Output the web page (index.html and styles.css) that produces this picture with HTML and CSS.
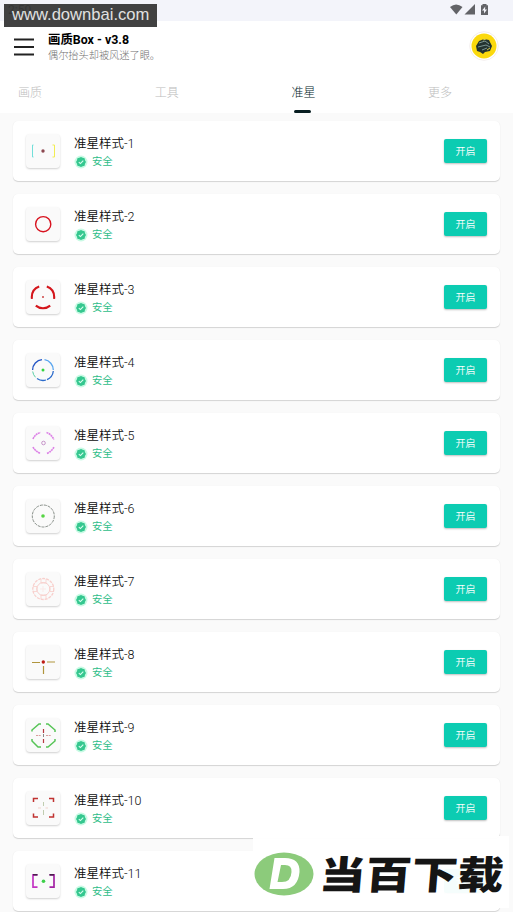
FILE: index.html
```
<!DOCTYPE html>
<html lang="zh-CN">
<head>
<meta charset="utf-8">
<title>画质Box</title>
<link rel="stylesheet" href="styles.css">
</head>
<body>
<div class="status">
  <span class="time">2:50</span>
  <svg class="status-icons" width="42" height="14" viewBox="0 0 42 14"><path d="M1 4Q7-1 13.500 4L7.300 11.500Z"/><path d="M26 1V11.500H15.500Z"/><path fill-rule="evenodd" d="M33.500 1h4v1.200H39V12h-7V2.200h1.500zM36.300 3.500L33 7.500h2v3L38 6.500h-2z"/></svg>
</div>
<header class="header">
  <svg class="menu" width="20" height="18" viewBox="0 0 20 18"><path d="M0 1.500H20M0 9H20M0 16.500H20"/></svg>
  <div class="heading">
    <h1>画质Box - v3.8</h1>
    <p>偶尔抬头却被风迷了眼。</p>
  </div>
  <svg class="avatar" width="30" height="30" viewBox="0 0 30 30"><circle cx="15" cy="15" r="14.300" fill="#fff" stroke="#f3eeee"/><circle cx="15" cy="15" r="12.500" fill="#fbd90d"/><path d="M7 15l3-5 5-2 5 1 3 6-2 5-5 1-2 2-3-2-3-1z" fill="#23332f"/><path d="M10 12l6-2 4 3M9 16l8-2 4 2M13 19l5-2" stroke="#7a9591" fill="none"/><path d="M14 9l3-1M18 19l3-2" stroke="#d5c444"/></svg>
</header>
<nav class="tabs">
  <span>画质</span><span>工具</span><span class="active">准星</span><span>更多</span>
</nav>
<main class="list" id="list"></main>
<div class="site-mark">www.downbai.com</div>
<div class="brand">
  <svg width="60" height="44" viewBox="0 0 60 44"><ellipse cx="30" cy="22" rx="29.500" ry="21.500" fill="#8ccb7b"/><path fill-rule="evenodd" fill="#fff" d="M20.500 6H31Q46 6 45.500 20Q44 37 29 37H15.500ZM27 13L23.500 30H28Q37 30 37.500 20Q38 13 31 13Z"/></svg>
  <span class="brand-name">当百下载</span>
</div>
<script src="app.js"></script>
</body>
</html>
```
FILE: styles.css
```
* { box-sizing: border-box; }
body {
  margin: 0;
  height: 912px;
  overflow: hidden;
  position: relative;
  background: #fafafa;
  font-family: Roboto, "Noto Sans CJK SC", sans-serif;
  color: #1b1b1b;
}
.status {
  height: 21px;
  padding: 3px 22px 0 8px;
  display: flex;
  justify-content: space-between;
  background: #f3f4fa;
  font-size: 12px;
  line-height: 14px;
}
.status-icons { fill: #626367; }
.header {
  height: 52px;
  padding: 0 14px 0 14px;
  display: flex;
  align-items: center;
  background: #fff;
}
.menu { stroke: #222; stroke-width: 2; margin-top: -1px; }
.avatar { margin-top: -2px; }
.heading { margin-left: 14px; flex: 1; }
.heading h1 { margin: 0; font-size: 12.400px; line-height: 17px; font-weight: 700; color: #000; }
.heading p { margin: 0; font-size: 10.200px; line-height: 15px; color: #707070; font-weight: 300; }
.tabs {
  height: 40px;
  padding-left: 18px;
  display: grid;
  grid-template-columns: repeat(3, 136.700px) auto;
  background: #fff;
  font-size: 12px;
  font-weight: 300;
  line-height: 41px;
  color: #bdbdbd;
}
.tabs .active { color: #001a1e; position: relative; justify-self: start; }
.tabs .active::after {
  content: "";
  position: absolute;
  left: 3px;
  top: 37px;
  width: 17px;
  height: 3px;
  border-radius: 2px;
  background: #071d20;
}
.list { padding: 8px 13px 0; display: flex; flex-direction: column; gap: 13px; }
.card {
  height: 60px;
  flex: none;
  padding: 0 13px;
  display: flex;
  align-items: center;
  background: #fff;
  border-radius: 5px;
  box-shadow: 0 1px 1px #00000026, 0 0 1px #00000010;
}
.thumb { width: 34px; height: 34px; border-radius: 4px; background: #fafafa; box-shadow: 0 1px 2px #00000030; }
.thumb svg { display: block; fill: none; }
.info { margin: 2px 0 0 14px; flex: 1; }
.name { font-size: 12.500px; line-height: 19px; font-weight: 350; color: #0c0c0c; }
.safe { display: flex; align-items: center; gap: 4px; height: 17px; font-size: 10.300px; line-height: 17px; color: #2fbd89; }
.open {
  width: 43px;
  height: 24px;
  padding: 1px 0 0;
  border: 0;
  border-radius: 2px;
  background: #0cccb2;
  box-shadow: 0 1px 2px #00000040;
  color: #fff;
  font: 350 10px/23px Roboto, "Noto Sans CJK SC", sans-serif;
}
.site-mark {
  position: absolute;
  left: 4px;
  top: 4px;
  width: 153px;
  height: 23px;
  padding-left: 8px;
  background: #373737f2;
  color: #e0e0e0;
  font: 16.600px/21px "Liberation Sans", sans-serif;
}
.brand {
  position: absolute;
  left: 253px;
  top: 836px;
  width: 256px;
  height: 72px;
  padding-left: 1px;
  display: flex;
  align-items: center;
  background: #fffffff5;
}
.brand svg { margin-top: 4px; }
.brand-name {
  margin: 0 0 0 6px;
  font: 900 46px/60px "Noto Sans CJK SC", sans-serif;
  color: #151515;
  white-space: nowrap;
  transform: scaleY(.84) skewX(-4deg);
}
```
FILE: app.js
```
const sights = [
  '<path d="M7.500 11H6.500V23H7.500" stroke="#72dfd9"/><path d="M26.500 11H28.500V23H26.500" stroke="#f2ed52"/><circle cx="17" cy="17" r="1.700" fill="#8c4850"/>',
  '<circle cx="17.200" cy="17.200" r="7.600" stroke="#d8131f" stroke-width="1.400"/>',
  '<circle cx="17" cy="17" r="11.200" stroke="#d4161c" stroke-width="2.100" pathLength="360" stroke-dasharray="80 40" stroke-dashoffset="-50"/><circle cx="17" cy="17" r="1" fill="#c44"/>',
  '<path d="M6.600 17A10.400 10.400 0 0 1 16 6.700" stroke="#2455c5" stroke-width="1.300"/><path d="M18.500 6.700A10.400 10.400 0 0 1 27.300 17" stroke="#58a5ef" stroke-width="1.300"/><path d="M27.300 18A10.400 10.400 0 0 1 21 26.600M20 27A10.400 10.400 0 0 1 11 25.500" stroke="#2b6bcb" stroke-width="1.300"/><path d="M9.500 24.300A10.400 10.400 0 0 1 6.700 18.500" stroke="#57cfa5"/><circle cx="17" cy="17" r="1.500" fill="#34d43d"/>',
  '<path d="M7 13Q9 8 14.500 6.500M20.500 6.500Q25 8 28 13.500M7 21Q9 25 14.500 27.500M21 27.500Q26 25 28 21" stroke="#dc80e6" stroke-width="1.600" stroke-dasharray="2 .5"/><circle cx="17.500" cy="17" r="1.800" stroke="#ba7dbe" stroke-width=".8"/>',
  '<circle cx="17.300" cy="17" r="11" stroke="#7a827c" stroke-width=".9" stroke-dasharray="3 1"/><circle cx="17" cy="17" r="1.800" fill="#55d443"/>',
  '<g stroke="#f8cfcc"><circle cx="17.300" cy="17" r="10.500" stroke-width="1.300" stroke-dasharray="3 1"/><circle cx="17.300" cy="17" r="6.500" stroke-width="1"/><path d="M15 7v4h5V7M15 27v-4h5v4M7 14.500h4v5H7M28 14.500h-4v5h4" stroke-width=".8"/></g><path d="M14 17h6M17 14v6" stroke="#fae9e8"/>',
  '<path d="M6 17.500H14M21 17H29M17.500 21V29" stroke="#b0953d" stroke-width="1.200"/><circle cx="17.300" cy="17" r="1.700" fill="#be1c14"/>',
  '<path d="M6 13.500V12L13 6H15M20 6h2l7 6v2M6 21v2l6 6h3M20 29h2l7-6v-2" stroke="#56c456" stroke-width="1.500"/><path d="M17.500 11v4M17.500 21v4" stroke="#b73840" stroke-width="1.200"/><path d="M10 17.500h5M20 17.500h5" stroke="#d99c9c" stroke-dasharray="2 .7"/><path d="M17.500 16v3" stroke="#888"/>',
  '<path d="M7.500 11V7.500H12M23 7.500h4.500V11M7.500 22.500V26H12M23 26h4.500v-3.500" stroke="#c03230" stroke-width="1.500"/><path d="M17.500 11v4M17.500 19v5" stroke="#c0cdb0"/><path d="M12 17h3M19.500 17H22" stroke="#f0d3cd"/>',
  '<path d="M11.500 10.800H7V23.200h4.500" stroke="#c334c2" stroke-width="1.700"/><path d="M23.500 10.800H28V23.200h-4.500" stroke="#a323a4" stroke-width="1.700"/><path d="M7 10.800h4.500M23.500 10.800H28" stroke="#49204b" stroke-width="1.500"/><circle cx="17.500" cy="17.200" r="1.800" fill="#3ed04b"/>'
];
const badge = '<svg width="14" height="14" viewBox="0 0 14 14"><circle cx="7" cy="7" r="6.500" fill="#c9fae4"/><path d="M7 2l1.700.8 1.900.5.4 1.900L12 7l-1 1.800-.4 1.900-1.900.5L7 12l-1.700-.8-1.900-.5L3 8.800 2 7l1-1.800.4-1.900 1.900-.5z" fill="#35c78f"/><path d="M4.800 7.100l1.600 1.500 2.900-3" fill="none" stroke="#d9fff0" stroke-width="1.100"/></svg>';
document.getElementById("list").innerHTML = sights.map((art, i) => `
  <section class="card">
    <div class="thumb"><svg width="34" height="34" viewBox="0 0 34 34">${art}</svg></div>
    <div class="info"><div class="name">准星样式-${i + 1}</div><div class="safe">${badge}<span>安全</span></div></div>
    <button class="open">开启</button>
  </section>`).join("");
```
